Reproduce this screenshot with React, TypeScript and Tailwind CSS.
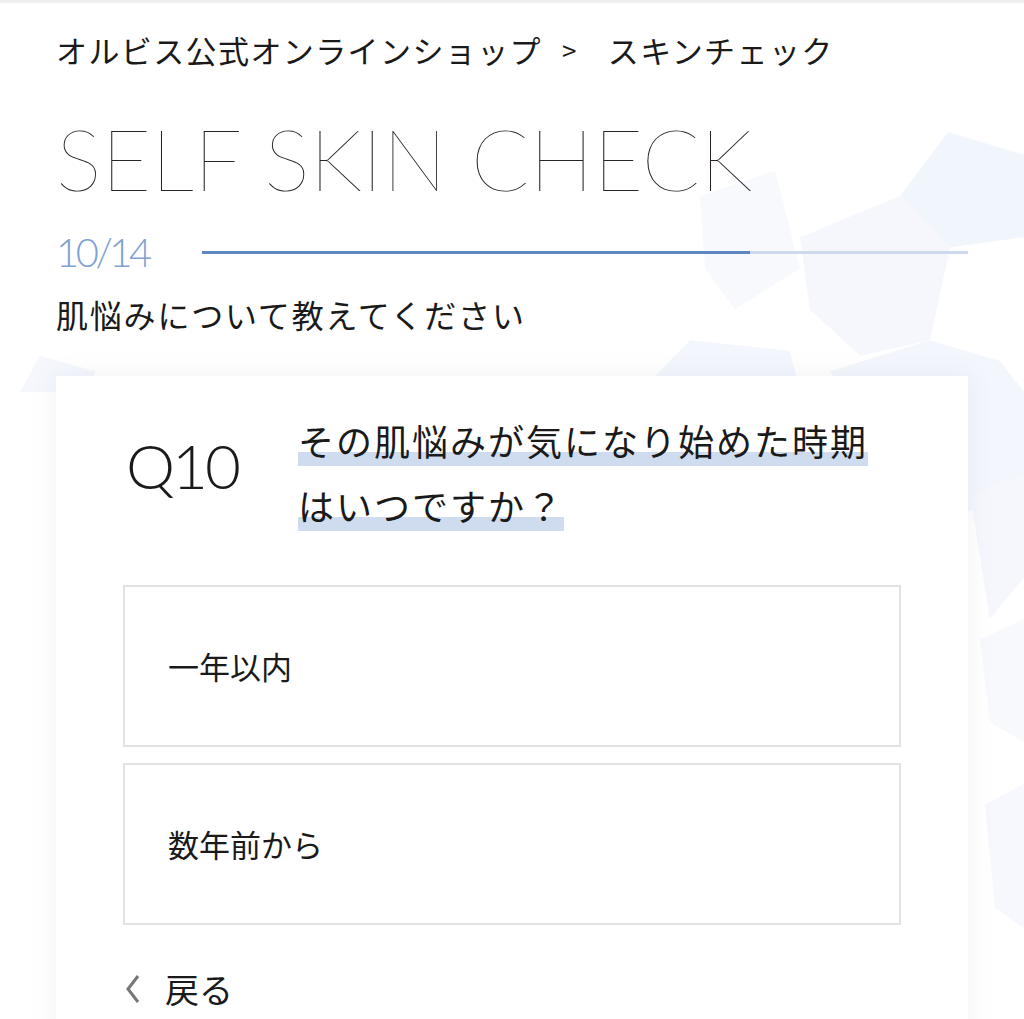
import React from "react";

const jp = { fontFamily: '"Noto Sans CJK JP", "Noto Sans", sans-serif' } as const;

function BgShapes() {
  return (
    <svg
      className="pointer-events-none absolute inset-0 h-full w-full"
      viewBox="0 0 1024 1019"
      preserveAspectRatio="none"
    >
      <polygon points="948,128 1024,150 1024,230 950,240 900,190" fill="#f1f5fc" />
      <polygon points="700,190 775,165 800,260 735,300 705,260" fill="#f7f9fd" />
      <polygon points="800,230 900,190 950,240 930,330 860,345 810,300" fill="#f5f7fd" />
      <polygon points="830,360 930,330 1000,350 1024,380 1024,470 960,500 880,450" fill="#f3f6fc" />
      <polygon points="640,380 690,330 790,340 800,380" fill="#f3f6fc" />
      <polygon points="20,380 40,345 95,360 90,380" fill="#f5f7fd" />
      <polygon points="970,480 1024,460 1024,560 990,600" fill="#f5f7fd" />
      <polygon points="980,620 1024,600 1024,720 990,700" fill="#f7f9fd" />
      <polygon points="985,780 1024,760 1024,900 995,880" fill="#f6f8fd" />
    </svg>
  );
}

export default function App() {
  return (
    <div className="relative min-h-[1019px] w-[1024px] overflow-hidden bg-white" style={jp}>
      <BgShapes />
      <div className="relative h-[3px] w-full bg-[#efefef]" />
      <div className="relative flex flex-col px-[56px]">
        <div className="mt-[27px] flex items-center text-[31px] leading-[40px] tracking-[1.4px] text-[#1a1a1a]">
          <span>オルビス公式オンラインショップ</span>
          <span className="ml-[20px] mr-[30px] text-[26px]">&gt;</span>
          <span>スキンチェック</span>
        </div>
        <h1
          className="mt-[38px] text-[86px] leading-[100px] text-[#2a2424]"
          style={{ fontFamily: 'Lato, "Noto Sans", sans-serif', fontWeight: 100, letterSpacing: "-0.3px" }}
        >
          SELF SKIN CHECK
        </h1>
        <div className="mt-[22px] flex items-center">
          <span
            className="w-[146px] text-[40px] leading-[44px] tracking-[-3.5px] text-[#7fa2d3]"
            style={{ fontFamily: 'Lato, "Noto Sans", sans-serif', fontWeight: 300 }}
          >
            10/14
          </span>
          <div className="flex h-[3px] flex-1 bg-[#cdd9ed]">
            <div className="h-full w-[548px] bg-[#5f87c2]" />
          </div>
        </div>
        <div className="mt-[18px] text-[32px] leading-[44px] tracking-[1.8px] text-[#1a1a1a]">肌悩みについて教えてください</div>

        <div className="mt-[40px] bg-white px-[67px] pt-[32px] pb-[40px] shadow-[0_0_24px_rgba(120,130,160,0.10)]">
          <div className="flex items-start">
            <div
              className="ml-[3px] mt-[27px] w-[172px] text-[62px] leading-[60px] tracking-[-3px] text-[#1a1a1a]"
              style={{ fontFamily: 'Lato, "Noto Sans", sans-serif', fontWeight: 300 }}
            >
              Q10
            </div>
            <div className="w-[590px] text-[36px] leading-[65px] tracking-[2px] text-[#1a1a1a]">
              <span className="box-decoration-clone bg-[linear-gradient(transparent_74%,#cfdcef_74%)]">
                その肌悩みが気になり始めた時期はいつですか？
              </span>
            </div>
          </div>

          <div className="mt-[47px] flex flex-col gap-[16px]">
            <div className="flex h-[162px] items-center border-2 border-[#e2e2e2] bg-white pl-[43px] text-[31px] text-[#1a1a1a]">
              一年以内
            </div>
            <div className="flex h-[162px] items-center border-2 border-[#e2e2e2] bg-white pl-[43px] text-[31px] text-[#1a1a1a]">
              数年前から
            </div>
          </div>

          <div className="mt-[42px] flex items-center text-[34px] leading-[44px] text-[#1a1a1a]">
            <svg width="20" height="34" viewBox="0 0 20 34" className="mr-[22px]">
              <polyline points="15,4 5,17 15,30" fill="none" stroke="#777" strokeWidth="3" />
            </svg>
            <span>戻る</span>
          </div>
        </div>
      </div>
    </div>
  );
}
